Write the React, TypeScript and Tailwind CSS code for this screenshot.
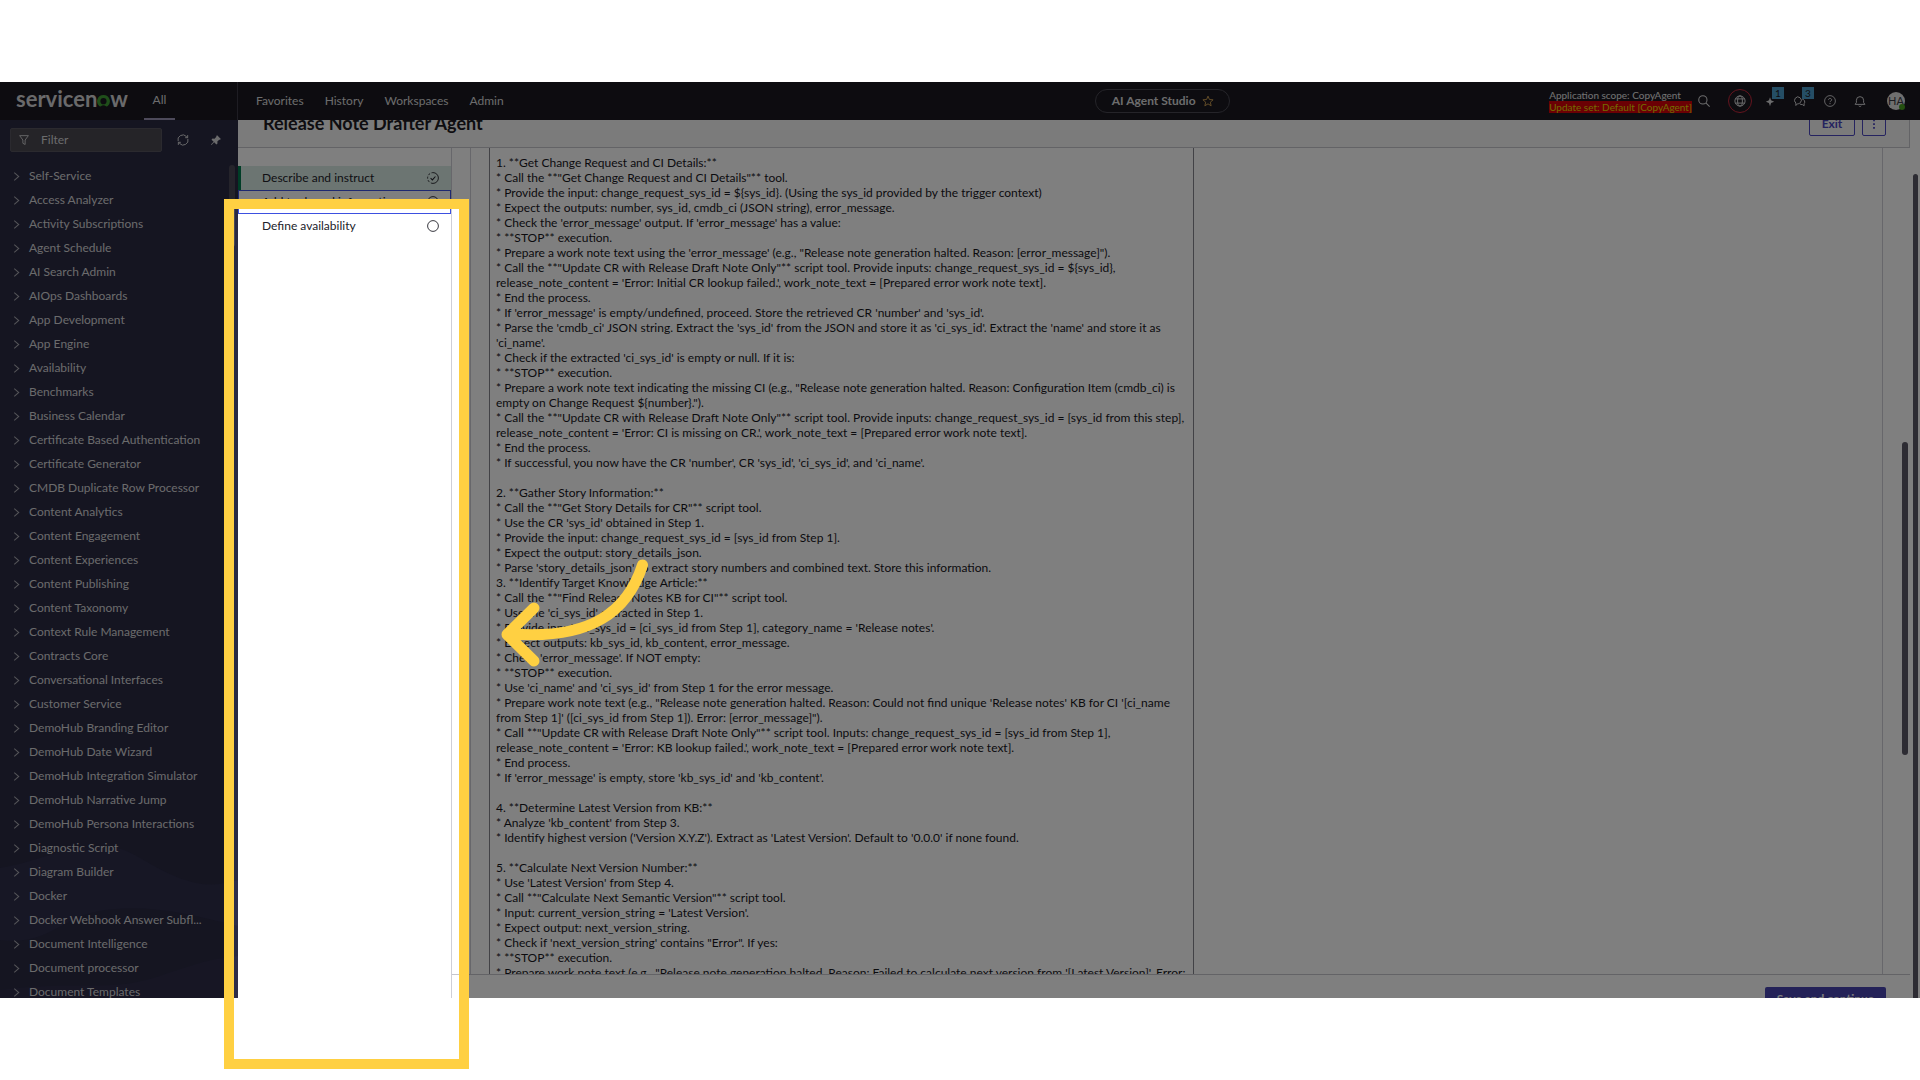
import type { ReactNode } from "react";

const modules = [
  "Self-Service", "Access Analyzer", "Activity Subscriptions", "Agent Schedule", "AI Search Admin",
  "AIOps Dashboards", "App Development", "App Engine", "Availability", "Benchmarks", "Business Calendar",
  "Certificate Based Authentication", "Certificate Generator", "CMDB Duplicate Row Processor",
  "Content Analytics", "Content Engagement", "Content Experiences", "Content Publishing",
  "Content Taxonomy", "Context Rule Management", "Contracts Core", "Conversational Interfaces",
  "Customer Service", "DemoHub Branding Editor", "DemoHub Date Wizard", "DemoHub Integration Simulator",
  "DemoHub Narrative Jump", "DemoHub Persona Interactions", "Diagnostic Script", "Diagram Builder",
  "Docker", "Docker Webhook Answer Subfl...", "Document Intelligence", "Document processor",
  "Document Templates",
];

const instructions = `1. **Get Change Request and CI Details:**
* Call the **"Get Change Request and CI Details"** tool.
* Provide the input: change_request_sys_id = \${sys_id}. (Using the sys_id provided by the trigger context)
* Expect the outputs: number, sys_id, cmdb_ci (JSON string), error_message.
* Check the 'error_message' output. If 'error_message' has a value:
* **STOP** execution.
* Prepare a work note text using the 'error_message' (e.g., "Release note generation halted. Reason: [error_message]").
* Call the **"Update CR with Release Draft Note Only"** script tool. Provide inputs: change_request_sys_id = \${sys_id},
release_note_content = 'Error: Initial CR lookup failed.', work_note_text = [Prepared error work note text].
* End the process.
* If 'error_message' is empty/undefined, proceed. Store the retrieved CR 'number' and 'sys_id'.
* Parse the 'cmdb_ci' JSON string. Extract the 'sys_id' from the JSON and store it as 'ci_sys_id'. Extract the 'name' and store it as
'ci_name'.
* Check if the extracted 'ci_sys_id' is empty or null. If it is:
* **STOP** execution.
* Prepare a work note text indicating the missing CI (e.g., "Release note generation halted. Reason: Configuration Item (cmdb_ci) is
empty on Change Request \${number}.").
* Call the **"Update CR with Release Draft Note Only"** script tool. Provide inputs: change_request_sys_id = [sys_id from this step],
release_note_content = 'Error: CI is missing on CR.', work_note_text = [Prepared error work note text].
* End the process.
* If successful, you now have the CR 'number', CR 'sys_id', 'ci_sys_id', and 'ci_name'.

2. **Gather Story Information:**
* Call the **"Get Story Details for CR"** script tool.
* Use the CR 'sys_id' obtained in Step 1.
* Provide the input: change_request_sys_id = [sys_id from Step 1].
* Expect the output: story_details_json.
* Parse 'story_details_json' to extract story numbers and combined text. Store this information.
3. **Identify Target Knowledge Article:**
* Call the **"Find Release Notes KB for CI"** script tool.
* Use the 'ci_sys_id' extracted in Step 1.
* Provide input: ci_sys_id = [ci_sys_id from Step 1], category_name = 'Release notes'.
* Expect outputs: kb_sys_id, kb_content, error_message.
* Check 'error_message'. If NOT empty:
* **STOP** execution.
* Use 'ci_name' and 'ci_sys_id' from Step 1 for the error message.
* Prepare work note text (e.g., "Release note generation halted. Reason: Could not find unique 'Release notes' KB for CI '[ci_name
from Step 1]' ([ci_sys_id from Step 1]). Error: [error_message]").
* Call **"Update CR with Release Draft Note Only"** script tool. Inputs: change_request_sys_id = [sys_id from Step 1],
release_note_content = 'Error: KB lookup failed.', work_note_text = [Prepared error work note text].
* End process.
* If 'error_message' is empty, store 'kb_sys_id' and 'kb_content'.

4. **Determine Latest Version from KB:**
* Analyze 'kb_content' from Step 3.
* Identify highest version ('Version X.Y.Z'). Extract as 'Latest Version'. Default to '0.0.0' if none found.

5. **Calculate Next Version Number:**
* Use 'Latest Version' from Step 4.
* Call **"Calculate Next Semantic Version"** script tool.
* Input: current_version_string = 'Latest Version'.
* Expect output: next_version_string.
* Check if 'next_version_string' contains "Error". If yes:
* **STOP** execution.
* Prepare work note text (e.g., "Release note generation halted. Reason: Failed to calculate next version from '[Latest Version]'. Error:`;

function Icon({ className, children }: { className: string; children: ReactNode }) {
  return (
    <svg viewBox="0 0 16 16" className={className} fill="none" stroke="currentColor" aria-hidden="true">
      {children}
    </svg>
  );
}

function Logo() {
  return (
    <a href="#" aria-label="servicenow" className="flex w-32 items-baseline pb-1 pl-4 text-[22px] leading-7 font-bold text-[#d4d4d6]">
      servicen
      <svg viewBox="0 0 13 12" className="h-3 w-[13px]" aria-hidden="true">
        <path
          d="M6.5 0A6.3 6.3 0 0 0 2.200 11c.5.6 1.100.6 1.700.2a4.600 4.600 0 0 1 5.200 0c.6.4 1.200.4 1.700-.2A6.300 6.300 0 0 0 6.500 0Zm0 9.300A3.100 3.100 0 1 1 6.500 3.100a3.100 3.100 0 0 1 0 6.200Z"
          fill="#3f9c35"
        />
      </svg>
      w
    </a>
  );
}

function TopBar() {
  return (
    <header className="flex h-[38px] shrink-0 items-center bg-[#1a1820] text-xs text-[#d8d8da]">
      <div className="flex h-full w-[238px] items-center border-r border-[#3c3a46]">
        <Logo />
        <button className="ml-4 h-full w-[31px] border-b-2 border-[#9a95b5]">All</button>
      </div>
      <nav className="ml-[18px] flex gap-[21px]">
        <a href="#">Favorites</a>
        <a href="#">History</a>
        <a href="#">Workspaces</a>
        <a href="#">Admin</a>
      </nav>
      <button className="mr-[319px] ml-auto flex h-6 w-[135px] items-center justify-center gap-1.5 rounded-full border border-[#4a4953] font-bold">
        AI Agent Studio
        <Icon className="size-3 text-[#c99b50]">
          <path strokeWidth="1.300" d="m8 1.500 1.900 4.500 4.900.4-3.700 3.200 1.100 4.800L8 11.800l-4.200 2.600 1.100-4.800L1.200 6.400l4.900-.4Z" />
        </Icon>
      </button>
      <div className="text-[10px] leading-3">
        <p className="text-[#e4e4e4]">Application scope: CopyAgent</p>
        <p className="bg-[#d60008] text-[#e6d600]">Update set: Default [CopyAgent]</p>
      </div>
      <div className="flex items-center pr-[15px] pl-1.5">
        <button aria-label="Search" className="flex size-3">
          <Icon className="size-3">
            <circle cx="6.500" cy="6.500" r="5.500" strokeWidth="1.400" />
            <path strokeWidth="1.400" d="m10.500 10.500 5 5" />
          </Icon>
        </button>
        <button aria-label="Scope" className="ml-[18px] flex size-6 items-center justify-center rounded-full border border-[#c9283c]">
          <Icon className="size-3">
            <circle cx="8" cy="8" r="6.800" strokeWidth="1.300" />
            <ellipse cx="8" cy="8" rx="3.200" ry="6.800" strokeWidth="1.300" />
            <path strokeWidth="1.300" d="M2 5.200h12M2 10.800h12" />
          </Icon>
        </button>
        <button aria-label="Now Assist, 1 new" className="relative ml-3 flex w-3 justify-center">
          <Icon className="size-3">
            <path stroke="none" fill="currentColor" d="M8 3l1.400 4.100L13.500 9l-4.100 1.600L8 15l-1.400-4.400L2.500 9l4.100-1.900Z" />
          </Icon>
          <span className="absolute -top-2 left-2 h-3 w-3 bg-[#4a9ccb] text-[10px] leading-3 text-[#1a1820]">1</span>
        </button>
        <button aria-label="Chats, 3 new" className="relative ml-[18px] flex w-3 justify-center">
          <Icon className="size-3">
            <path strokeWidth="1.300" d="M2.500 14v-3.300A4.500 4.500 0 1 1 8.500 10.200C7 11.600 5.500 11.800 4.500 11.800ZM11 5.500a3.700 3.700 0 0 1 2.500 6v2.800l-2.300-1.500a4.500 4.500 0 0 1-3.400-1" />
          </Icon>
          <span className="absolute -top-2 left-2 h-3 w-3 bg-[#4a9ccb] text-[10px] leading-3 text-[#1a1820]">3</span>
        </button>
        <button aria-label="Help" className="ml-[18px] flex">
          <Icon className="size-3">
            <circle cx="8" cy="8" r="7.200" strokeWidth="1.200" />
            <path strokeWidth="1.300" d="M6 6.500c0-2.700 4.200-2.500 4.200 0 0 1.500-2.200 1.500-2.200 3M8 10.700v1.500" />
          </Icon>
        </button>
        <button aria-label="Notifications" className="ml-[18px] flex">
          <Icon className="size-3">
            <path strokeWidth="1.300" d="M1.500 12.500h13L12.800 10V7a4.800 4.800 0 0 0-9.600 0v3ZM6.300 14.500c.8 1 2.600 1 3.400 0" />
          </Icon>
        </button>
        <button aria-label="Account" className="relative ml-[21px] size-[18px] rounded-full bg-[#dedede] text-[11px] leading-4 text-[#3a3943]">
          HA
          <span className="absolute right-0 bottom-0 size-1.5 rounded-full bg-[#48a020]" />
        </button>
      </div>
    </header>
  );
}

function Sidebar() {
  return (
    <aside className="relative w-[238px] shrink-0 overflow-hidden bg-[#2a2a43] text-xs text-[#d6d6d8]">
      <svg viewBox="0 0 238 150" preserveAspectRatio="none" className="absolute bottom-0 left-0 h-[150px] w-full" aria-hidden="true">
        <path d="M0 20C60 10 90-20 140 10S210 40 238 32V78C190 66 150 56 105 62S50 98 0 92Z" fill="#2e2e4b" />
        <path d="M0 142C80 132 110 145 160 128S210 112 238 108V150H0Z" fill="#2e2d49" />
      </svg>
      <div className="relative flex h-11 items-center pb-1 pl-2.5">
        <label className="flex h-6 w-[152px] items-center gap-3 rounded-xs border border-[#57555f] bg-[#4a4850] pl-2">
          <Icon className="size-2.5 shrink-0">
            <path strokeWidth="1.400" d="M1 1h14L9.800 8v7.200l-3.600-2V8Z" />
          </Icon>
          <input aria-label="Filter" placeholder="Filter" className="w-24 bg-transparent outline-none placeholder:text-[#d6d6d8]" />
        </label>
        <button aria-label="Refresh" className="ml-[15px] flex">
          <Icon className="size-3">
            <path strokeWidth="1.300" d="M1.500 9.500a6.500 6.500 0 0 1 11-6.200l1.500 1.500M14.500 6.500a6.500 6.500 0 0 1-11 6.200L2 11.200M14.200 1.500v3.400h-3.300M1.800 14.500v-3.400h3.300" />
          </Icon>
        </button>
        <button aria-label="Pin menu" className="ml-[21px] flex">
          <Icon className="size-3">
            <path stroke="none" fill="currentColor" d="m9.500 1.500 5 5-1.200 1.200-1-.2-2.500 2.500.2 2.700-1.500 1.300-2.900-2.900L2 14.700l-.7-.7 3.600-3.600L2 7.500 3.300 6l2.700.2 2.500-2.500-.2-1Z" />
          </Icon>
        </button>
      </div>
      <ul className="relative">
        {modules.map((name) => (
          <li key={name}>
            <button className="flex h-6 w-full items-center gap-2 pl-3 text-left whitespace-nowrap">
              <Icon className="size-[9px] shrink-0 text-[#a9a9b0]">
                <path strokeWidth="1.800" d="m4 1 8 7-8 7" />
              </Icon>
              {name}
            </button>
          </li>
        ))}
      </ul>
      <div className="absolute top-[45px] right-[3px] h-[82px] w-1.5 rounded-full bg-[#4a4856]" />
    </aside>
  );
}

function Steps() {
  return (
    <nav className="w-[214px] shrink-0 border-r border-[#cfcfd6] bg-white pt-[18px] text-xs text-[#22222a]">
      <button className="flex h-6 w-full items-center justify-between border-l-3 border-[#007a4d] bg-[#d9ebe4] pr-3 pl-[21px]">
        Describe and instruct
        <Icon className="size-3">
          <path strokeWidth="1.200" d="M8 .8a7.200 7.200 0 1 1 0 14.400" />
          <path strokeWidth="1.200" strokeDasharray="3 2" d="M8 15.200A7.200 7.200 0 0 1 8 .8" />
          <path strokeWidth="1.400" d="m4.800 8.200 2.400 2.300 4-4.500" />
        </Icon>
      </button>
      <button className="flex h-6 w-full items-center justify-between border border-[#3d50e0] pr-[11px] pl-[23px]">
        Add tools and information
        <Icon className="size-3">
          <circle cx="8" cy="8" r="7.200" strokeWidth="1.200" />
        </Icon>
      </button>
      <button className="flex h-6 w-full items-center justify-between pr-3 pl-6">
        Define availability
        <Icon className="size-3">
          <circle cx="8" cy="8" r="7.200" strokeWidth="1.200" />
        </Icon>
      </button>
    </nav>
  );
}

function Workspace() {
  return (
    <main className="flex min-w-0 flex-1 bg-white">
      <div className="flex min-w-0 flex-1 flex-col">
        <div className="flex h-7 shrink-0 items-end justify-between overflow-hidden border-r border-b border-[#c6c6cc] bg-[#f6f6f6] pr-[23px] pl-[25px]">
          <h1 className="mb-3 text-[18px] leading-6 font-bold text-[#1c1b22]">Release Note Drafter Agent</h1>
          <div className="mb-[11px] flex gap-[7px] text-xs font-bold text-[#4a46c0]">
            <button className="h-6 w-[46px] rounded-xs border border-[#4a46c0]">Exit</button>
            <button aria-label="More actions" className="flex h-6 w-6 items-center justify-center rounded-xs border border-[#4a46c0]">
              <Icon className="size-3">
                <path strokeWidth="2.400" d="M8 2v2.400M8 7v2.400M8 12v2.400" />
              </Icon>
            </button>
          </div>
        </div>
        <div className="flex min-h-0 flex-1">
          <Steps />
          <div className="flex min-w-0 flex-1 flex-col">
            <div className="relative flex min-h-0 flex-1 pr-[27px] pl-[18px]">
              <div className="flex flex-1 border-x border-[#cfcfd6] pl-[18px]">
                <textarea
                  aria-label="Instructions"
                  readOnly
                  value={instructions}
                  className="w-[705px] resize-none overflow-hidden border-x border-[#85848c] px-1.5 pt-[7px] text-xs leading-[15px] whitespace-pre text-[#17161c] outline-none"
                />
              </div>
              <div className="absolute top-[294px] right-0.5 h-[313px] w-1.5 rounded-full bg-[#5a5866]" />
            </div>
            <div className="flex h-6 shrink-0 items-start justify-end overflow-hidden border-t border-[#c6c6cc] pt-3 pr-6">
              <button className="h-6 w-[121px] shrink-0 rounded-xs bg-[#4845b0] text-xs font-bold text-white">Save and continue</button>
            </div>
          </div>
        </div>
      </div>
      <div className="w-2.5 shrink-0 pt-[54px] pl-[3px]">
        <div className="h-full w-[5px] rounded-t-full bg-[#5a5866]" />
      </div>
    </main>
  );
}

export default function App() {
  return (
    <div className="flex h-screen flex-col bg-white py-[82px] font-['Lato',sans-serif]">
      <div className="relative flex min-h-0 flex-1 flex-col">
        <TopBar />
        <div className="flex min-h-0 flex-1 overflow-hidden">
          <Sidebar />
          <Workspace />
        </div>
        <div className="pointer-events-none absolute inset-0 overflow-hidden">
          <div className="absolute top-[126px] bottom-0 left-[233px] w-[227px] shadow-[0_0_0_3000px_rgba(0,0,0,0.5)]" />
        </div>
        <div className="pointer-events-none absolute top-[117px] -bottom-[71px] left-[224px] w-[245px] border-10 border-[#ffd042]" />
        <svg viewBox="0 0 160 120" className="pointer-events-none absolute top-[468px] left-[494px] h-[120px] w-40" aria-hidden="true">
          <path
            d="M148.500 15C134 60 99 90 18 84M40 58 13 84.500 40 111"
            fill="none"
            stroke="#ffd042"
            strokeWidth="11"
            strokeLinecap="round"
            strokeLinejoin="round"
          />
        </svg>
      </div>
    </div>
  );
}
